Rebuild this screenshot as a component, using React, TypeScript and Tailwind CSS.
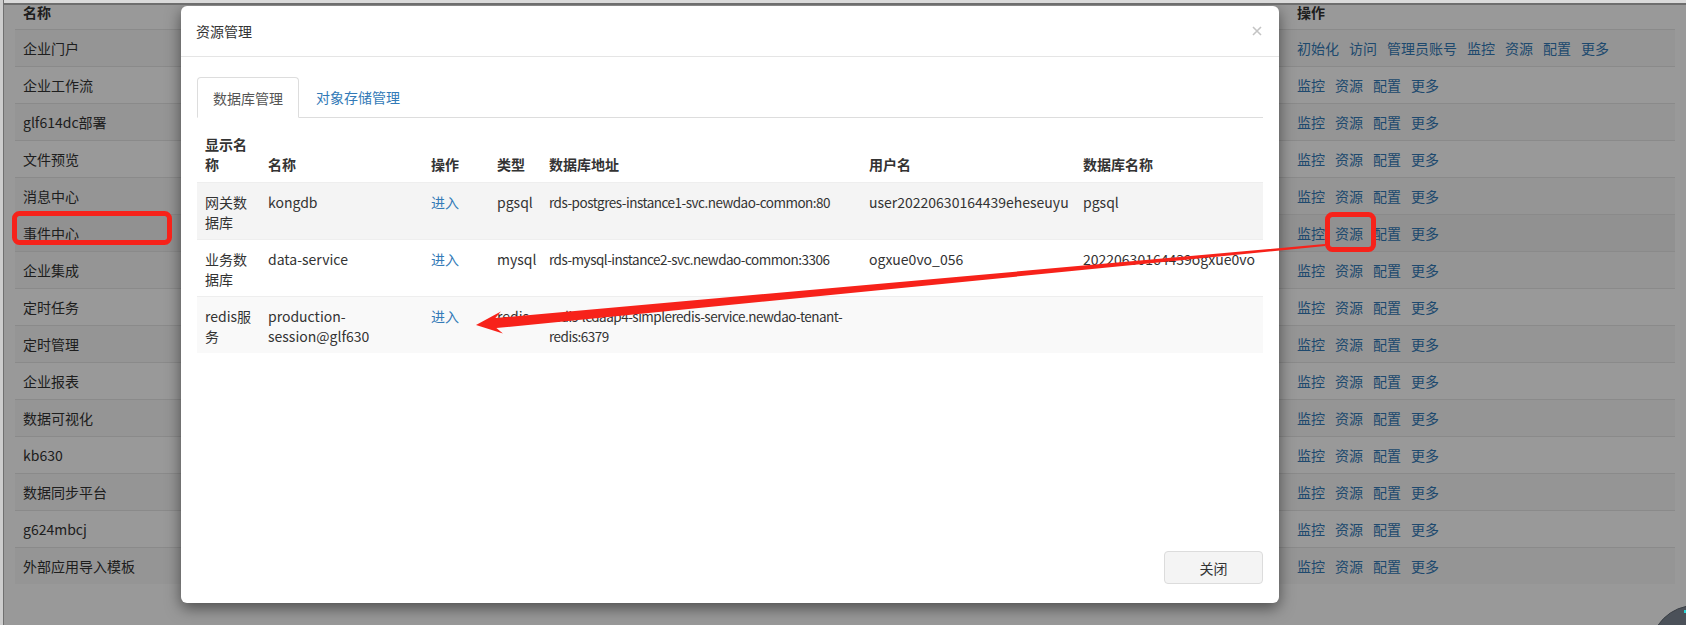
import React from 'react';

const apps = [
  '企业门户',
  '企业工作流',
  'glf614dc部署',
  '文件预览',
  '消息中心',
  '事件中心',
  '企业集成',
  '定时任务',
  '定时管理',
  '企业报表',
  '数据可视化',
  'kb630',
  '数据同步平台',
  'g624mbcj',
  '外部应用导入模板',
];

const dbRows = [
  {
    label: '网关数据库',
    name: 'kongdb',
    type: 'pgsql',
    address: ['rds-postgres-instance1-svc.newdao-common:80'],
    user: 'user20220630164439eheseuyu',
    dbName: 'pgsql',
    bg: 'bg-[#f4f4f4]',
  },
  {
    label: '业务数据库',
    name: 'data-service',
    type: 'mysql',
    address: ['rds-mysql-instance2-svc.newdao-common:3306'],
    user: 'ogxue0vo_056',
    dbName: '20220630164439ogxue0vo',
    bg: 'bg-white',
  },
  {
    label: 'redis服务',
    name: 'production-session@glf630',
    type: 'redis',
    address: ['redis-lcdaap4-simpleredis-service.newdao-tenant-', 'redis:6379'],
    user: '',
    dbName: '',
    bg: 'bg-[#f9f9f9]',
  },
];

// arrow geometry: tail near the highlighted link, tip at the third row
const tail = { x: 1325, y: 245 };
const tip = { x: 476, y: 325 };
const len = Math.hypot(tail.x - tip.x, tail.y - tip.y);
const ux = (tail.x - tip.x) / len;
const uy = (tail.y - tip.y) / len;
const nx = -uy;
const ny = ux;

function pt(d: number, w: number) {
  return `${(tip.x + ux * d + nx * w).toFixed(1)},${(tip.y + uy * d + ny * w).toFixed(1)}`;
}

const arrowPoints = [
  pt(0, 0),
  pt(26, 11),
  pt(20, 5),
  `${(tail.x + nx * 1).toFixed(1)},${(tail.y + ny * 1).toFixed(1)}`,
  `${(tail.x - nx * 1).toFixed(1)},${(tail.y - ny * 1).toFixed(1)}`,
  pt(20, -5),
  pt(26, -11),
].join(' ');

function AppTable() {
  return (
    <div className="pl-[15px] pr-[11px]">
      <div className="flex h-[29px] items-start pt-[2px] font-bold text-[#333]">
        <div className="w-[1274px] pl-[8px] leading-[20px]">名称</div>
        <div className="pl-[8px] leading-[20px]">操作</div>
      </div>
      {apps.map((name, i) => {
        const bg = i === 5 ? 'bg-[#f2f2f2]' : i % 2 === 0 ? 'bg-[#f9f9f9]' : 'bg-white';
        const links = i === 0 ? ['初始化', '访问', '管理员账号', '监控', '资源', '配置', '更多'] : ['监控', '资源', '配置', '更多'];
        return (
          <div key={name} className={`flex h-[37px] items-center border-t border-[#e6e6e6] ${bg}`}>
            <div className="w-[1274px] pl-[8px] text-[#333]">{name}</div>
            <div className="flex gap-[10px] pl-[8px] text-[#337ab7]">
              {links.map((l) => (
                <span key={l}>{l}</span>
              ))}
            </div>
          </div>
        );
      })}
    </div>
  );
}

function ResourceDialog() {
  return (
    <div className="absolute left-[181px] top-[6px] flex h-[597px] w-[1098px] flex-col rounded-[6px] bg-white shadow-[0_5px_15px_rgba(0,0,0,0.5)]">
      <div className="flex h-[51px] items-center justify-between border-b border-[#e5e5e5] pl-[15px] pr-[17px]">
        <span className="text-[#333]">资源管理</span>
        <svg width="10" height="10" viewBox="0 0 10 10">
          <path d="M1 1 L9 9 M9 1 L1 9" stroke="#c4c4c4" strokeWidth="1.6" />
        </svg>
      </div>

      <div className="flex-1 px-[16px] pt-[20px]">
        <div className="flex border-b border-[#ddd]">
          <div className="-mb-px mr-[2px] flex h-[41px] items-center rounded-t-[4px] border border-[#ddd] border-b-white bg-white px-[15px] text-[#555]">
            数据库管理
          </div>
          <div className="flex h-[40px] items-center px-[15px] text-[#337ab7]">对象存储管理</div>
        </div>

        <table className="mt-[6px] w-[1066px] table-fixed border-collapse text-[#333]">
          <colgroup>
            <col className="w-[63px]" />
            <col className="w-[163px]" />
            <col className="w-[66px]" />
            <col className="w-[52px]" />
            <col className="w-[320px]" />
            <col className="w-[214px]" />
            <col className="w-[188px]" />
          </colgroup>
          <thead>
            <tr className="font-bold">
              <th className="px-[8px] pb-[8px] pt-[10px] text-left align-bottom">显示名称</th>
              <th className="px-[8px] pb-[8px] pt-[10px] text-left align-bottom">名称</th>
              <th className="px-[8px] pb-[8px] pt-[10px] text-left align-bottom">操作</th>
              <th className="px-[8px] pb-[8px] pt-[10px] text-left align-bottom">类型</th>
              <th className="pl-[8px] pb-[8px] pt-[10px] text-left align-bottom">数据库地址</th>
              <th className="px-[8px] pb-[8px] pt-[10px] text-left align-bottom">用户名</th>
              <th className="px-[8px] pb-[8px] pt-[10px] text-left align-bottom">数据库名称</th>
            </tr>
          </thead>
          <tbody>
            {dbRows.map((r) => (
              <tr key={r.name} className={`border-t border-[#eee] ${r.bg}`}>
                <td className="px-[8px] pb-[7px] pt-[9px] align-top">{r.label}</td>
                <td className="px-[8px] pb-[7px] pt-[9px] align-top">{r.name}</td>
                <td className="px-[8px] pb-[7px] pt-[9px] align-top text-[#337ab7]">进入</td>
                <td className="px-[8px] pb-[7px] pt-[9px] align-top">{r.type}</td>
                <td className="pl-[8px] pb-[7px] pt-[9px] align-top whitespace-nowrap text-[13.5px] tracking-[-0.5px]">
                  {r.address.map((line) => (
                    <div key={line}>{line}</div>
                  ))}
                </td>
                <td className="px-[8px] pb-[7px] pt-[9px] align-top whitespace-nowrap">{r.user}</td>
                <td className="px-[8px] pb-[7px] pt-[9px] align-top whitespace-nowrap">{r.dbName}</td>
              </tr>
            ))}
          </tbody>
        </table>
      </div>

      <div className="flex justify-end pb-[19px] pr-[16px]">
        <button className="h-[33px] w-[99px] rounded-[4px] border border-[#dcdcdc] bg-[#f4f4f4] text-[#333]">
          关闭
        </button>
      </div>
    </div>
  );
}

export default function App() {
  return (
    <div className="relative h-[625px] w-full overflow-hidden bg-white font-['Noto_Sans_CJK_SC',sans-serif] text-[14px] leading-[20px]">
      <AppTable />

      <div className="absolute inset-0 bg-black/40" />

      <ResourceDialog />

      {/* screenshot edges */}
      <div className="absolute left-0 right-0 top-0 h-[5px] border-b-2 border-[#6e6e6e] bg-[#dadada]" />
      <div className="absolute bottom-0 left-0 top-0 w-[4px] border-r border-[#707070] bg-[#cdcdcd]" />

      {/* floating round button, bottom right */}
      <div className="absolute left-[1650px] top-[605px] h-[90px] w-[90px] rounded-full border border-[#3a3f45] bg-[#4b5159]">
        <div className="ml-[33px] mt-[4px] h-[3px] w-[3px] bg-[#2ad4d4]" />
      </div>

      {/* red annotations */}
      <svg className="pointer-events-none absolute left-0 top-0" width="1686" height="625" viewBox="0 0 1686 625">
        <rect x="14.5" y="213.5" width="155" height="29" rx="5" fill="none" stroke="#f7221a" strokeWidth="5" />
        <rect x="1327.5" y="214.5" width="46" height="35" rx="5" fill="none" stroke="#f7221a" strokeWidth="5" />
        <polygon points={arrowPoints} fill="#f7221a" />
      </svg>
    </div>
  );
}
